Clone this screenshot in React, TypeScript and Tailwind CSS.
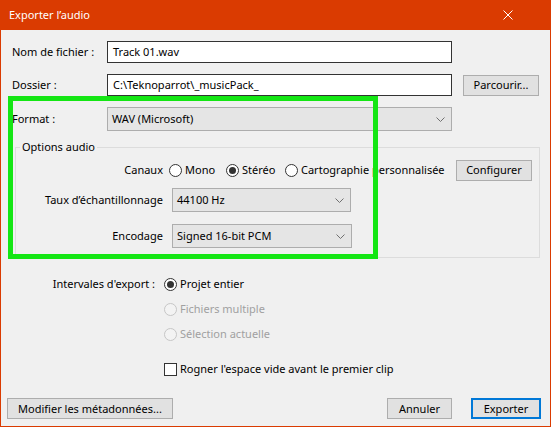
import React from "react"

const Chevron = () => (
  <svg width="9" height="5" viewBox="0 0 9 5" className="shrink-0">
    <polyline points="0.5,0.5 4.5,4.5 8.5,0.5" fill="none" stroke="#707070" strokeWidth="1" />
  </svg>
)

function Radio ( { checked = false, disabled = false }: { checked?: boolean; disabled?: boolean } )
{
  return (
    <span
      className={ `flex h-[13px] w-[13px] shrink-0 items-center justify-center rounded-full border ${ disabled ? "border-[#c6c6c6] bg-[#f3f3f3]" : "border-[#333333] bg-white" }` }
    >
      { checked && <span className="h-[7px] w-[7px] rounded-full bg-[#333333]" /> }
    </span>
  )
}

function Select ( { value, className }: { value: string; className: string } )
{
  return (
    <div className={ `flex items-center justify-between border border-[#adadad] bg-[#e5e5e5] pl-[4px] pr-[6px] ${ className }` }>
      <span>{ value }</span>
      <Chevron />
    </div>
  )
}

function Button ( { label, className, primary = false }: { label: string; className: string; primary?: boolean } )
{
  return (
    <div
      className={ `flex items-center justify-center bg-[#e1e1e1] ${ primary ? "border-2 border-[#0078d7]" : "border border-[#adadad]" } ${ className }` }
    >
      { label }
    </div>
  )
}

export default function App ()
{
  return (
    <div
      className="relative flex h-[427px] w-[551px] flex-col whitespace-nowrap border-x border-b border-[#da3b01] bg-[#f0f0f0] text-[11px] leading-[16px] text-black"
      style={ { fontFamily: '"Segoe UI", "Noto Sans", "Open Sans", sans-serif' } }
    >
      {/* title bar */ }
      <div className="flex h-[30px] shrink-0 items-center justify-between bg-[#da3b01] pl-[8px] pr-[37px] text-white">
        <span>Exporter l’audio</span>
        <svg width="10" height="10" viewBox="0 0 10 10">
          <path d="M0.5 0.5 L9.5 9.5 M9.5 0.5 L0.5 9.5" stroke="#ffffff" strokeWidth="1" />
        </svg>
      </div>

      {/* file name */ }
      <div className="mt-[11px] flex h-[22px] items-center">
        <span className="w-[106px] pl-[11px]">Nom de fichier :</span>
        <div className="flex h-[22px] w-[345px] items-center border border-[#333333] bg-white pl-[5px]">Track 01.wav</div>
      </div>

      {/* folder */ }
      <div className="mt-[11px] flex h-[22px] items-center">
        <span className="w-[106px] pl-[11px]">Dossier :</span>
        <div className="flex h-[22px] w-[345px] items-center border border-[#333333] bg-white pl-[5px]">C:\Teknoparrot\_musicPack_</div>
        <Button label="Parcourir..." className="ml-[11px] h-[21px] w-[76px]" />
      </div>

      {/* format */ }
      <div className="mt-[11px] flex h-[24px] items-center">
        <span className="w-[106px] pl-[11px]">Format :</span>
        <Select value="WAV (Microsoft)" className="h-[24px] w-[345px]" />
      </div>

      {/* audio options */ }
      <fieldset className="ml-[14px] mt-[8px] w-[525px] border border-[#dcdcdc] pb-[9px]">
        <legend className="ml-[4px] px-[2px]">Options audio</legend>

        <div className="mt-[4px] flex h-[22px] items-center">
          <span className="w-[147px] text-right">Canaux</span>
          <label className="ml-[6px] flex w-[57px] items-center gap-[3px]">
            <Radio />
            <span>Mono</span>
          </label>
          <label className="flex w-[59px] items-center gap-[3px]">
            <Radio checked />
            <span>Stéréo</span>
          </label>
          <label className="flex w-[171px] items-center gap-[3px]">
            <Radio />
            <span>Cartographie personnalisée</span>
          </label>
          <Button label="Configurer" className="h-[21px] w-[76px]" />
        </div>

        <div className="mt-[7px] flex h-[24px] items-center">
          <span className="w-[147px] text-right">Taux d’échantillonnage</span>
          <Select value="44100 Hz" className="ml-[9px] h-[24px] w-[179px]" />
        </div>

        <div className="mt-[12px] flex h-[24px] items-center">
          <span className="w-[147px] text-right">Encodage</span>
          <Select value="Signed 16-bit PCM" className="ml-[9px] h-[24px] w-[180px]" />
        </div>
      </fieldset>

      {/* export range */ }
      <div className="mt-[16px] flex items-start">
        <span className="flex h-[20px] w-[154px] items-center justify-end">Intervales d'export :</span>
        <div className="ml-[9px] flex flex-col gap-[5px]">
          <label className="flex h-[20px] items-center gap-[3px]">
            <Radio checked />
            <span>Projet entier</span>
          </label>
          <label className="flex h-[20px] items-center gap-[3px] text-[#a0a0a0]">
            <Radio disabled />
            <span>Fichiers multiple</span>
          </label>
          <label className="flex h-[20px] items-center gap-[3px] text-[#a0a0a0]">
            <Radio disabled />
            <span>Sélection actuelle</span>
          </label>
        </div>
      </div>

      <div className="ml-[163px] mt-[15px] flex h-[20px] items-center gap-[3px]">
        <span className="h-[13px] w-[13px] border border-[#333333] bg-white" />
        <span>Rogner l'espace vide avant le premier clip</span>
      </div>

      {/* buttons */ }
      <div className="mt-[19px] flex h-[21px] items-center">
        <Button label="Modifier les métadonnées..." className="ml-[6px] h-[21px] w-[166px]" />
        <Button label="Annuler" className="ml-auto h-[21px] w-[65px]" />
        <Button label="Exporter" primary className="ml-[19px] mr-[9px] h-[21px] w-[70px]" />
      </div>

      {/* annotation highlight */ }
      <div className="pointer-events-none absolute left-[7px] top-[96px] h-[163px] w-[370px] border-[5px] border-[#14e614]" />
    </div>
  )
}
